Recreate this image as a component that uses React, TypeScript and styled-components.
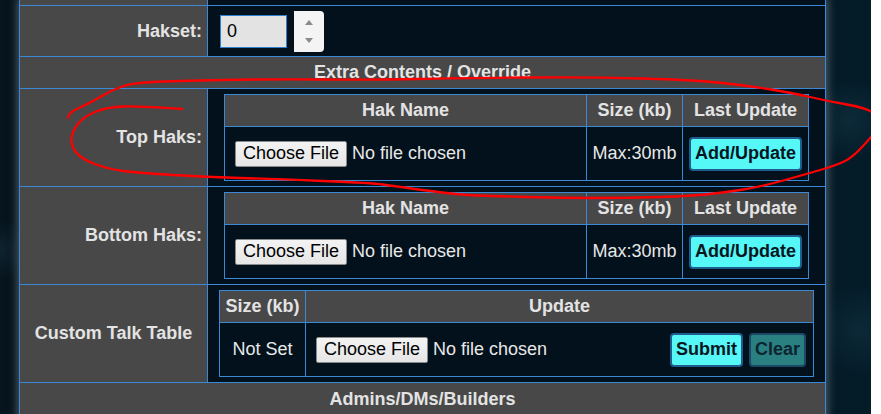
import React from "react";
import styled, { createGlobalStyle } from "styled-components";

const BORDER = "#3b88d4";
const GRAY = "#484848";
const DARK = "#02111b";

const GlobalStyle = createGlobalStyle`
  html, body {
    margin: 0;
    padding: 0;
    background: #fff;
  }
  body {
    font-family: "Liberation Sans", Arial, sans-serif;
    font-size: 18px;
  }
  * {
    box-sizing: border-box;
  }
`;

// red freehand circle drawn over the screenshot
const markPoints: number[][] = [
  [182, 109], [140, 106], [107, 107], [83, 117], [72, 132], [71, 145],
  [80, 158], [107, 169], [140, 173], [207, 177], [273, 179], [373, 183],
  [393, 186], [460, 195], [493, 196], [560, 198], [627, 198], [693, 196],
  [727, 192], [760, 187], [810, 173], [837, 165], [853, 157], [873, 135],
  [880, 125], [878, 117], [867, 108], [827, 101], [793, 93], [743, 85],
  [693, 80], [593, 77], [460, 78], [373, 80], [273, 79], [173, 81],
  [132, 83], [112, 90], [90, 103], [70, 112], [68, 118],
];

const smoothPath = (pts: number[][]) => {
  let d = `M${pts[0][0]} ${pts[0][1]}`;
  for (let i = 1; i < pts.length - 1; i++) {
    const [x, y] = pts[i];
    const [nx, ny] = pts[i + 1];
    d += ` Q${x} ${y} ${(x + nx) / 2} ${(y + ny) / 2}`;
  }
  const last = pts[pts.length - 1];
  return d + ` L${last[0]} ${last[1]}`;
};

const Hak = ({ label }: { label: string }) => (
  <Row $h={98}>
    <Label>{label}</Label>
    <Value>
      <SubTable $cols="362px 96px 126px" $width={585}>
        <Th>Hak Name</Th>
        <Th>Size (kb)</Th>
        <Th>Last Update</Th>
        <Td $pad="0 10px">
          <FilePick>
            <FileButton>Choose File</FileButton>
            <span>No file chosen</span>
          </FilePick>
        </Td>
        <Td $center>Max:30mb</Td>
        <Td $center>
          <ActionButton>Add/Update</ActionButton>
        </Td>
      </SubTable>
    </Value>
  </Row>
);

const App = () => {
  return (
    <>
      <GlobalStyle />
      <Page>
        <Panel>
          <Row $h={6}>
            <Label />
            <Value />
          </Row>
          <Row $h={51}>
            <Label>Hakset:</Label>
            <Value $inline>
              <NumberBox readOnly value="0" />
              <Spinner>
                <Arrow $up />
                <Arrow />
              </Spinner>
            </Value>
          </Row>
          <Section $h={32}>Extra Contents / Override</Section>
          <Hak label="Top Haks:" />
          <Hak label="Bottom Haks:" />
          <Row $h={98}>
            <Label $center>Custom Talk Table</Label>
            <Value>
              <SubTable $cols="86px 508px" $width={595}>
                <Th>Size (kb)</Th>
                <Th>Update</Th>
                <Td $center>Not Set</Td>
                <Td $pad="0 7px 0 10px" $spread>
                  <FilePick>
                    <FileButton>Choose File</FileButton>
                    <span>No file chosen</span>
                  </FilePick>
                  <Buttons>
                    <ActionButton>Submit</ActionButton>
                    <ActionButton $muted>Clear</ActionButton>
                  </Buttons>
                </Td>
              </SubTable>
            </Value>
          </Row>
          <Section $h={33}>Admins/DMs/Builders</Section>
        </Panel>
        <Marks viewBox="0 0 881 414">
          <path
            d={smoothPath(markPoints)}
            fill="none"
            stroke="#ff0000"
            strokeWidth="2.3"
            strokeLinecap="round"
            strokeLinejoin="round"
          />
        </Marks>
      </Page>
    </>
  );
};

export default App;

const Page = styled.div`
  position: relative;
  width: 871px;
  height: 414px;
  overflow: hidden;
  padding-left: 19px;
  background:
    radial-gradient(circle at 850px 120px, rgba(30, 70, 90, 0.35), transparent 40px),
    radial-gradient(circle at 860px 330px, rgba(30, 70, 90, 0.3), transparent 45px),
    radial-gradient(circle at 0px 250px, rgba(30, 60, 80, 0.35), transparent 30px),
    linear-gradient(90deg, #06141d 0%, #041c28 100%);
`;

const Panel = styled.div`
  width: 807px;
  height: 420px;
  background: ${DARK};
  border-left: 1px solid ${BORDER};
  border-right: 1px solid ${BORDER};
  box-shadow: 0 0 8px 2px rgba(125, 140, 155, 0.55);
`;

const Row = styled.div<{ $h: number }>`
  display: grid;
  grid-template-columns: 188px 1fr;
  height: ${(p) => p.$h}px;
  border-bottom: 1px solid ${BORDER};
`;

const Label = styled.div<{ $center?: boolean }>`
  display: flex;
  align-items: center;
  justify-content: ${(p) => (p.$center ? "center" : "flex-end")};
  padding-right: ${(p) => (p.$center ? "0" : "5px")};
  background: ${GRAY};
  border-right: 1px solid ${BORDER};
  color: #e3e3e3;
  font-weight: bold;
`;

const Value = styled.div<{ $inline?: boolean }>`
  display: flex;
  flex-direction: ${(p) => (p.$inline ? "row" : "column")};
  align-items: ${(p) => (p.$inline ? "center" : "stretch")};
  padding: ${(p) => (p.$inline ? "0 0 0 12px" : "5px 0 0")};
  background: ${DARK};
`;

const Section = styled.div<{ $h: number }>`
  display: flex;
  align-items: center;
  justify-content: center;
  height: ${(p) => p.$h}px;
  background: ${GRAY};
  border-bottom: 1px solid ${BORDER};
  color: #e3e3e3;
  font-weight: bold;
`;

const NumberBox = styled.input`
  width: 67px;
  height: 33px;
  margin: 0 7px 0 0;
  padding: 0 6px;
  background: #e3e3e3;
  border: 1px solid #2f7fd0;
  color: #000;
  font-family: "Liberation Sans", Arial, sans-serif;
  font-size: 18px;
  outline: none;
`;

const Spinner = styled.div`
  display: flex;
  flex-direction: column;
  align-items: center;
  justify-content: space-between;
  width: 30px;
  height: 41px;
  margin-top: 1px;
  padding: 9px 0 9px;
  background: #f4f4f4;
  border-radius: 0 4px 4px 0;
`;

const Arrow = styled.span<{ $up?: boolean }>`
  width: 0;
  height: 0;
  border-left: 4px solid transparent;
  border-right: 4px solid transparent;
  border-bottom: ${(p) => (p.$up ? "5px solid #8a8a8a" : "0")};
  border-top: ${(p) => (p.$up ? "0" : "5px solid #8a8a8a")};
`;

const SubTable = styled.div<{ $cols: string; $width: number }>`
  display: grid;
  grid-template-columns: ${(p) => p.$cols};
  grid-template-rows: 32px 54px;
  width: ${(p) => p.$width}px;
  margin: 0 auto;
  border-top: 1px solid ${BORDER};
  border-left: 1px solid ${BORDER};
`;

const Th = styled.div`
  display: flex;
  align-items: center;
  justify-content: center;
  background: ${GRAY};
  border-right: 1px solid ${BORDER};
  border-bottom: 1px solid ${BORDER};
  color: #e3e3e3;
  font-weight: bold;
`;

const Td = styled.div<{ $center?: boolean; $spread?: boolean; $pad?: string }>`
  display: flex;
  align-items: center;
  justify-content: ${(p) =>
    p.$spread ? "space-between" : p.$center ? "center" : "flex-start"};
  padding: ${(p) => p.$pad || "0"};
  border-right: 1px solid ${BORDER};
  border-bottom: 1px solid ${BORDER};
  color: #e8e8e8;
`;

const FilePick = styled.div`
  display: flex;
  align-items: center;
  gap: 5px;
  color: #e8e8e8;
`;

const FileButton = styled.span`
  display: inline-flex;
  align-items: center;
  height: 26px;
  padding: 0 7px;
  background: linear-gradient(#f3f3f3, #e6e6e6);
  border: 1px solid #8a8a8a;
  border-radius: 2px;
  color: #000;
`;

const Buttons = styled.div`
  display: flex;
  gap: 6px;
`;

const ActionButton = styled.button<{ $muted?: boolean }>`
  height: 34px;
  padding: 0 4px;
  background: ${(p) => (p.$muted ? "#2a8080" : "#55f7f7")};
  border: 2px solid ${(p) => (p.$muted ? "#1b4a66" : "#1e5d8e")};
  border-radius: 4px;
  color: ${(p) => (p.$muted ? "#0c2530" : "#08161f")};
  font-family: "Liberation Sans", Arial, sans-serif;
  font-size: 18px;
  font-weight: bold;
  cursor: pointer;
`;

const Marks = styled.svg`
  position: absolute;
  top: 0;
  left: 0;
  width: 881px;
  height: 414px;
  overflow: visible;
  pointer-events: none;
`;
